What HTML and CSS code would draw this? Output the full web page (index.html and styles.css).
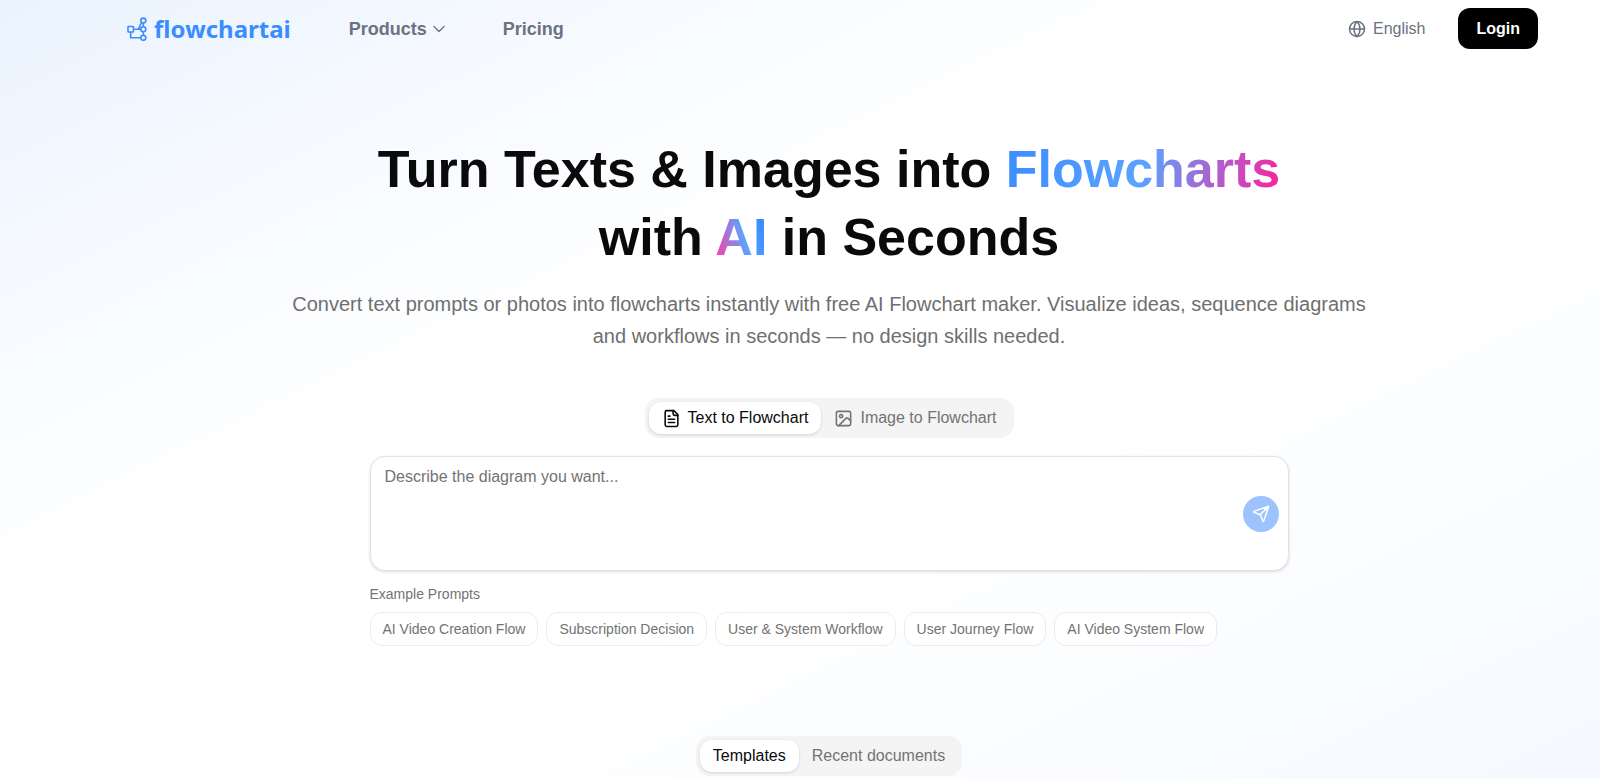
FILE: index.html
```html
<!DOCTYPE html>
<html lang="en">
<head>
<meta charset="utf-8">
<meta name="viewport" content="width=device-width, initial-scale=1">
<title>flowchartai</title>
<link rel="stylesheet" href="styles.css">
</head>
<body class="page">
<header class="navbar">
  <a class="brand" href="#">
    <svg class="brand-icon" viewBox="0 0 20 24" fill="none" stroke="currentColor" stroke-width="1.6">
      <rect x="1" y="9.500" width="5.500" height="5.500" rx=".6"/>
      <circle cx="16.300" cy="3.600" r="2.500"/><circle cx="16.300" cy="12.300" r="2.500"/><circle cx="16.300" cy="20.800" r="2.500"/>
      <path d="M6.500 12.300h7.300M16.300 6.100v3.700M16.300 14.800v3.500M3.700 15v5.800h10.100M10.800 12.300c1.600-.4 1.400-3.300 3.600-6.300"/>
    </svg>
    <span>flowchartai</span>
  </a>
  <nav class="menu">
    <button class="menu-item" type="button">Products
      <svg class="chevron" viewBox="0 0 12 12" fill="none" stroke="currentColor" stroke-width="1.3" stroke-linecap="round" stroke-linejoin="round"><path d="M1 3.500l5 5 5-5"/></svg>
    </button>
    <a class="menu-item" href="#">Pricing</a>
  </nav>
  <div class="actions">
    <button class="language" type="button">
      <svg class="icon-sm" viewBox="0 0 24 24" fill="none" stroke="currentColor" stroke-width="2"><circle cx="12" cy="12" r="10"/><path d="M12 2a14.500 14.500 0 0 0 0 20 14.500 14.500 0 0 0 0-20M2 12h20"/></svg>
      English
    </button>
    <button class="login" type="button">Login</button>
  </div>
</header>
<main class="hero">
  <h1 class="title">Turn Texts &amp; Images into <span class="grad">Flowcharts</span><br>with <span class="grad grad-reverse">AI</span> in Seconds</h1>
  <p class="subtitle">Convert text prompts or photos into flowcharts instantly with free AI Flowchart maker. Visualize ideas, sequence diagrams and workflows in seconds — no design skills needed.</p>
  <div class="tabs" role="tablist">
    <button class="tab tab-active" type="button" role="tab" aria-selected="true">
      <svg class="icon" viewBox="0 0 24 24" fill="none" stroke="currentColor" stroke-width="2" stroke-linecap="round" stroke-linejoin="round"><path d="M15 2H6a2 2 0 0 0-2 2v16a2 2 0 0 0 2 2h12a2 2 0 0 0 2-2V7Z"/><path d="M14 2v4a2 2 0 0 0 2 2h4M10 9H8M16 13H8M16 17H8"/></svg>
      Text to Flowchart
    </button>
    <button class="tab" type="button" role="tab" aria-selected="false">
      <svg class="icon" viewBox="0 0 24 24" fill="none" stroke="currentColor" stroke-width="2" stroke-linecap="round" stroke-linejoin="round"><rect x="3" y="3" width="18" height="18" rx="2"/><circle cx="9" cy="9" r="2"/><path d="m21 15-3.086-3.086a2 2 0 0 0-2.828 0L6 21"/></svg>
      Image to Flowchart
    </button>
  </div>
  <form class="composer">
    <div class="prompt-box">
      <textarea class="prompt" aria-label="Diagram description" placeholder="Describe the diagram you want..."></textarea>
      <button class="send" type="button" aria-label="Send">
        <svg class="icon-sm" viewBox="0 0 24 24" fill="none" stroke="currentColor" stroke-width="2" stroke-linecap="round" stroke-linejoin="round"><path d="M14.536 21.686a.5.5 0 0 0 .937-.024l6.500-19a.496.496 0 0 0-.635-.635l-19 6.500a.5.5 0 0 0-.024.937l7.930 3.180a2 2 0 0 1 1.112 1.110zM21.854 2.147l-10.940 10.939"/></svg>
      </button>
    </div>
    <p class="examples-label">Example Prompts</p>
    <div class="chips">
      <button class="chip" type="button">AI Video Creation Flow</button>
      <button class="chip" type="button">Subscription Decision</button>
      <button class="chip" type="button">User &amp; System Workflow</button>
      <button class="chip" type="button">User Journey Flow</button>
      <button class="chip" type="button">AI Video System Flow</button>
    </div>
  </form>
  <div class="tabs library-tabs" role="tablist">
    <button class="tab tab-active" type="button" role="tab" aria-selected="true">Templates</button>
    <button class="tab" type="button" role="tab" aria-selected="false">Recent documents</button>
  </div>
</main>
</body>
</html>
```
FILE: styles.css
```css
* { box-sizing: border-box; }

.page {
  margin: 0;
  min-height: 100vh;
  font-family: "Liberation Sans", Arial, sans-serif;
  font-size: 16px;
  color: #0a0a0a;
  background: linear-gradient(to bottom right, #eaf3ff 0%, #f5f9ff 17%, #fff 38%, #fff 62%, #f5f9ff 100%);
}

button {
  font: inherit;
  color: inherit;
  border: 0;
  padding: 0;
  background: none;
  cursor: pointer;
}

a { color: inherit; text-decoration: none; }
svg { flex: none; }

.navbar {
  display: flex;
  align-items: center;
  padding: 8px 62px 8px 127px;
  color: #6b7280;
}

.brand {
  display: flex;
  align-items: center;
  gap: 7px;
  color: #3b8cff;
  font-family: "Noto Sans", sans-serif;
  font-weight: 700;
  font-size: 24px;
  line-height: 32px;
}

.brand-icon { width: 20px; height: 24px; }

.menu { display: flex; gap: 58px; margin-left: 58px; }

.menu-item {
  display: flex;
  align-items: center;
  gap: 6px;
  font-size: 18px;
  font-weight: 700;
  line-height: 24px;
}

.chevron { width: 12px; height: 12px; }

.actions { display: flex; align-items: center; gap: 33px; margin-left: auto; }
.language { display: flex; align-items: center; gap: 7px; }
.icon { width: 19px; height: 19px; }
.icon-sm { width: 18px; height: 18px; }

.login {
  padding: 0 18px;
  border-radius: 12px;
  background: #000;
  color: #fff;
  font-weight: 700;
  line-height: 41px;
}

.hero {
  display: flex;
  flex-direction: column;
  align-items: center;
  padding: 78px 0 0 58px;
}

.title {
  margin: 0;
  font-size: 52px;
  line-height: 68px;
  text-align: center;
}

.grad {
  color: transparent;
  background: linear-gradient(105deg, #3b8cff, #5ba3ff 50%, #ff1f9c);
  background-clip: text;
  -webkit-background-clip: text;
}

.grad-reverse { background-image: linear-gradient(75deg, #ff3fa4 5%, #5ba3ff 55%, #3b8cff 85%); }

.subtitle {
  max-width: 1100px;
  margin: 17px 0 0;
  color: #6f6f6f;
  font-size: 20px;
  line-height: 32px;
  text-align: center;
}

.tabs {
  display: flex;
  margin-top: 46px;
  padding: 4px;
  border-radius: 14px;
  background: #f4f4f4;
}

.tab {
  display: flex;
  align-items: center;
  gap: 7px;
  padding: 0 13px;
  border-radius: 12px;
  color: #737373;
  line-height: 32px;
}

.tab-active {
  background: #fff;
  color: #0a0a0a;
  box-shadow: 0 1px 3px rgba(0, 0, 0, .14);
}

.composer { width: 100%; max-width: 919px; margin-top: 18px; }
.prompt-box { position: relative; display: flex; }

.prompt {
  flex: 1;
  height: 115px;
  padding: 10px 56px 10px 14px;
  border: 1px solid #e2e2e2;
  border-radius: 15px;
  background: #fff;
  box-shadow: 0 1px 3px rgba(0, 0, 0, .14);
  font: 16px/20px "Liberation Sans", Arial, sans-serif;
  resize: none;
}

.prompt::placeholder { color: #737373; opacity: 1; }

.send {
  position: absolute;
  top: 40px;
  right: 10px;
  display: grid;
  place-items: center;
  width: 36px;
  height: 36px;
  border-radius: 50%;
  background: #9dc3ff;
  color: #fff;
}

.examples-label { margin: 13px 0 8px; color: #737373; font-size: 14px; line-height: 20px; }
.chips { display: flex; flex-wrap: wrap; gap: 8px; }

.chip {
  padding: 0 12px;
  border: 1px solid #ececec;
  border-radius: 12px;
  background: #fff;
  color: #737373;
  font-size: 14px;
  line-height: 32px;
}

.library-tabs { margin-top: 90px; }
```
